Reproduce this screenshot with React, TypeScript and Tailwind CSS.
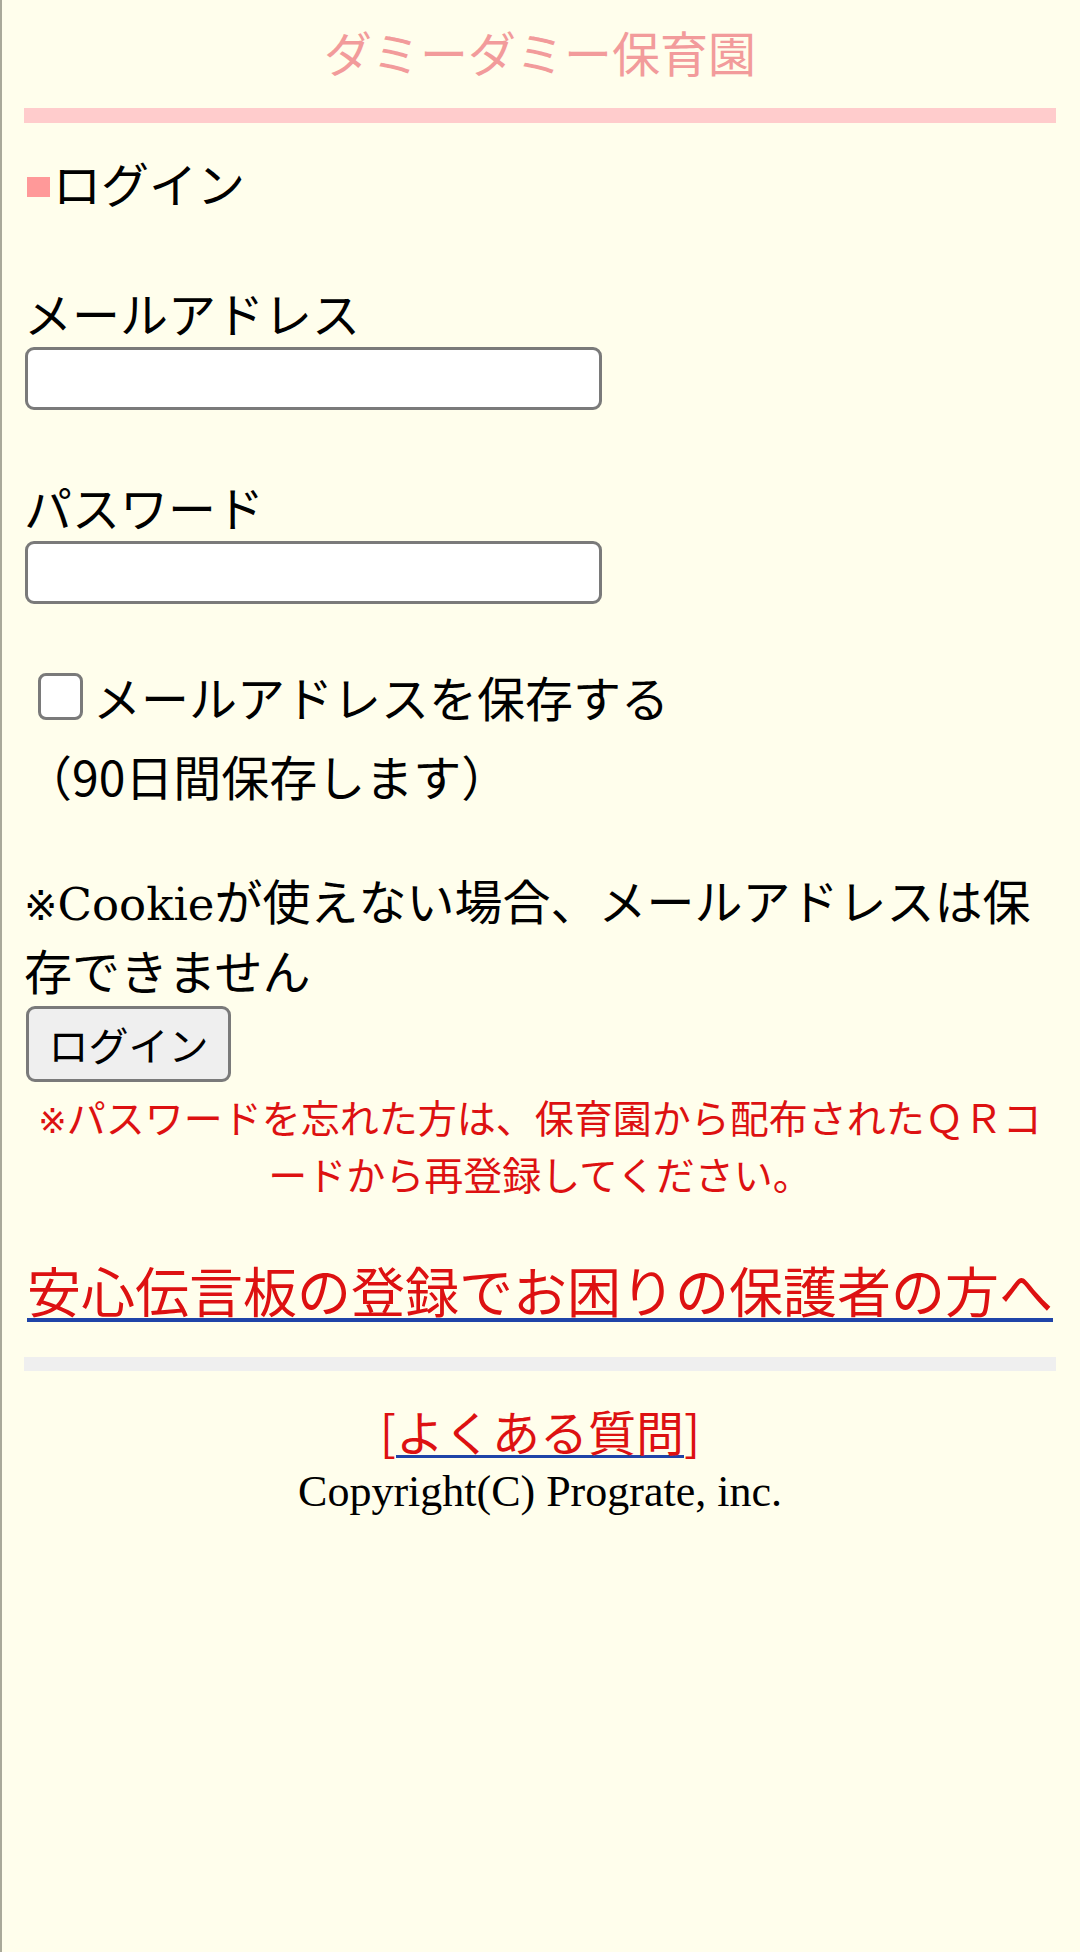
import React from 'react';

const JP = '[font-family:"Noto_Sans_CJK_JP",sans-serif]';

export default function App() {
  return (
    <div className={`min-h-[1952px] bg-[#fffeec] border-l-2 border-[#a9a99a] pl-[22px] pr-[24px] text-black text-[48px] ${JP}`}>
      {/* Header */}
      <h1 className="pt-[16px] text-center text-[48px] leading-[70px] font-normal text-[#f29b9b]">ダミーダミー保育園</h1>
      <div className="mt-[22px] h-[15px] bg-[#ffcccc]" />

      {/* Login form */}
      <h2 className="mt-[24px] leading-[70px] font-normal">
        <span className="inline-block w-[23px] h-[20px] ml-[3px] mr-[3px] mb-[6px] bg-[#ff9999] align-baseline" />
        ログイン
      </h2>

      <div className="mt-[60px] leading-[70px]">メールアドレス</div>
      <input type="text" className="block w-[577px] h-[63px] ml-[1px] bg-white border-[3px] border-[#7a7a7a] rounded-[9px] outline-none" />

      <div className="mt-[61px] leading-[70px]">パスワード</div>
      <input type="password" className="block w-[577px] h-[63px] ml-[1px] bg-white border-[3px] border-[#7a7a7a] rounded-[9px] outline-none" />

      <label className="mt-[57px] h-[70px] flex items-center">
        <span className="w-[45px] h-[47px] ml-[14px] mr-[10px] bg-white border-[3px] border-[#7a7a7a] rounded-[8px]" />
        <span className="leading-[70px]">メールアドレスを保存する</span>
      </label>
      <div className="mt-[9px] leading-[70px]">（90日間保存します）</div>

      <p className="mt-[54px] leading-[70px]">
        <span className="[font-family:'DejaVu_Sans'] text-[40px] leading-none">※</span>
        <span className="[font-family:'DejaVu_Serif'] text-[45px] leading-none">Cookie</span>
        が使えない場合、メールアドレスは保<br />存できません
      </p>
      <button className="block mt-[2px] ml-[2px] w-[205px] h-[76px] bg-[#efefef] border-[3px] border-[#7a7a7a] rounded-[9px] text-[40px] leading-none text-black">
        ログイン
      </button>
      <p className="mt-[6px] text-center text-[39px] leading-[57px] text-[#dd1111]">
        <span className="[font-family:'DejaVu_Sans'] text-[34px] leading-none">※</span>
        パスワードを忘れた方は、保育園から配布されたＱＲコードから再登録してください。
      </p>

      {/* Help link */}
      <div className="mt-[49px] text-center text-[54px] leading-[78px]">
        <a href="#" className="underline decoration-[#1f44a8] decoration-[4px] underline-offset-[5px] text-[#dd1111]">
          安心伝言板の登録でお困りの保護者の方へ
        </a>
      </div>
      <div className="mt-[28px] h-[14px] bg-[#efefef]" />

      {/* Footer */}
      <div className="mt-[29px] text-center leading-[60px] text-[#dd1111]">
        [<a href="#" className="underline decoration-[#1f44a8] decoration-[3px] underline-offset-[4px]">よくある質問</a>]
      </div>
      <div className="mt-[6px] text-center text-[44px] leading-[52px] [font-family:'Liberation_Serif',serif]">
        Copyright(C) Prograte, inc.
      </div>
    </div>
  );
}
